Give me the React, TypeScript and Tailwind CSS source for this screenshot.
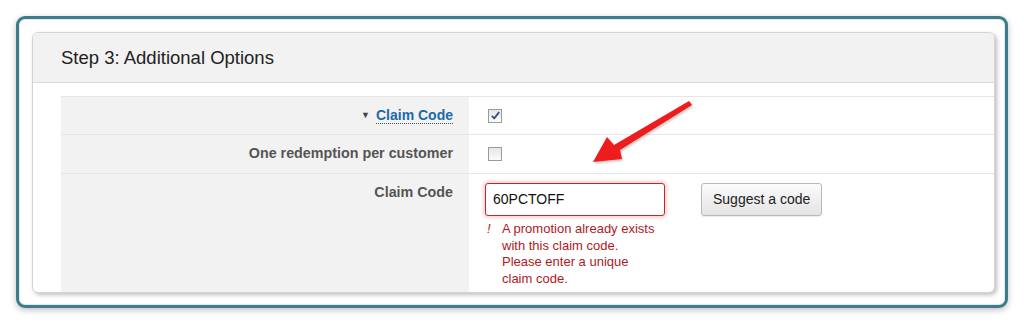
import React from "react";

// --- Sub-Components ---

const Checkbox = ({ checked }: { checked?: boolean }) => (
	<span className="ml-[3px] flex h-[14px] w-[14px] items-center justify-center border border-[#9a9a9a] bg-gradient-to-b from-[#e6e6e6] to-[#fbfbfb]">
		{checked && (
			<svg viewBox="0 0 12 12" className="h-[11px] w-[11px]">
				<path d="M2 6.5 L4.6 9.2 L10 2.3" fill="none" stroke="#3b4f86" strokeWidth="2" strokeLinejoin="round" />
			</svg>
		)}
	</span>
);

const Arrow = () => (
	<svg className="pointer-events-none absolute left-[590px] top-[100px]" width="106" height="66" viewBox="0 0 106 66">
		<defs>
			<filter id="sh" x="-20%" y="-20%" width="140%" height="140%">
				<feDropShadow dx="1" dy="1.5" stdDeviation="1.2" floodColor="#000" floodOpacity="0.25" />
			</filter>
		</defs>
		<polygon points="99,1 102,5 30,50 32,59 3,62 17,37 24,45" fill="#ee1c1c" filter="url(#sh)" />
	</svg>
);

// --- Main ---

export default function App() {
	return (
		<div className="relative h-[324px] w-[1024px] overflow-hidden bg-white p-4 font-['Liberation_Sans',Arial,sans-serif]">
			{/* Outer teal frame */}
			<div className="h-[292px] w-[992px] rounded-[9px] border-[3px] border-[#3f7b89] bg-white pb-[12px] pl-[13px] pr-[10px] pt-[13px] shadow-[0_2px_6px_rgba(0,0,0,0.25),inset_0_0_0_1px_#d8ecf2]">
				{/* Inner panel */}
				<div className="h-full overflow-hidden rounded-[6px] border border-[#d4d4d4] bg-white shadow-[2px_2px_4px_rgba(0,0,0,0.25)]">
					{/* Header */}
					<div className="flex h-[50px] items-center border-b border-[#dcdcdc] bg-[#f2f2f2] pl-[28px] text-[18.5px] text-[#222]">
						Step 3: Additional Options
					</div>

					<div className="pl-[28px] pt-[13px]">
						<div className="border-t border-[#e6e6e6]">
							{/* Row 1 */}
							<div className="flex h-[38px] border-b border-[#e6e6e6]">
								<div className="flex w-[408px] items-center justify-end bg-[#f2f2f2] pr-4">
									<span className="mr-[6px] text-[9px] text-[#444]">▼</span>
									<span className="border-b border-dotted border-[#555] text-[14px] font-bold leading-[16px] text-[#1c6aa8]">
										Claim Code
									</span>
								</div>
								<div className="flex items-center pl-4">
									<Checkbox checked />
								</div>
							</div>

							{/* Row 2 */}
							<div className="flex h-[39px] border-b border-[#e6e6e6]">
								<div className="flex w-[408px] items-center justify-end bg-[#f2f2f2] pr-4 text-[14.3px] font-bold text-[#555]">
									One redemption per customer
								</div>
								<div className="flex items-center pl-4">
									<Checkbox />
								</div>
							</div>

							{/* Row 3 */}
							<div className="flex h-[130px]">
								<div className="w-[408px] bg-[#f2f2f2] pr-4 pt-[10px] text-right text-[14.3px] font-bold leading-[16px] text-[#555]">
									Claim Code
								</div>
								<div className="flex items-start pl-4 pt-[9px]">
									<div className="w-[180px]">
										<div className="flex h-[33px] items-center rounded-[3px] border border-[#c0282d] px-[7px] text-[14px] text-[#111] shadow-[0_0_3px_2px_rgba(230,80,90,0.25)]">
											60PCTOFF
										</div>
										<div className="mt-[5px] flex text-[13px] leading-[16.5px] text-[#b0191e]">
											<span className="w-[17px] pl-[2px] italic">!</span>
											<span className="w-[156px]">
												A promotion already exists with this claim code. Please enter a unique claim code.
											</span>
										</div>
									</div>
									<button className="ml-[36px] h-[33px] rounded-[3px] border border-[#b8b8b8] bg-gradient-to-b from-[#fbfbfb] to-[#e4e4e4] px-[11px] text-[14px] text-[#222] shadow-[0_1px_1px_rgba(0,0,0,0.08)]">
										Suggest a code
									</button>
								</div>
							</div>
						</div>
					</div>
				</div>
			</div>

			<Arrow />
		</div>
	);
}
